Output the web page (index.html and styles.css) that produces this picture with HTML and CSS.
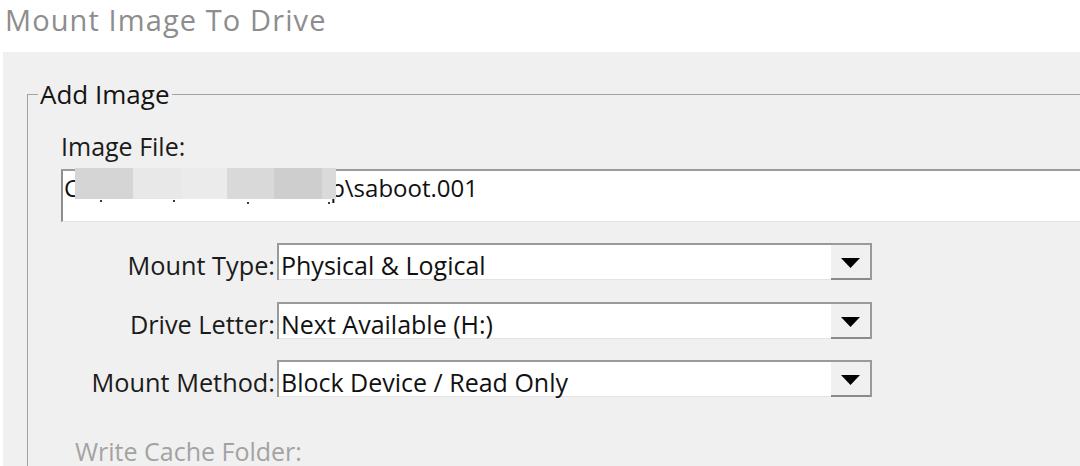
FILE: index.html
```html
<!DOCTYPE html>
<html lang="en">
<head>
<meta charset="utf-8">
<title>Mount Image To Drive</title>
<link rel="stylesheet" href="styles.css">
</head>
<body>
<div class="title">Mount Image To Drive</div>
<div class="panel">
  <fieldset class="group">
    <legend class="group-legend">Add Image</legend>
    <div class="content">
      <div class="field-label">Image File:</div>
      <div class="textbox">
        <span class="tb-text">C<span class="tb-gap"></span>p\saboot.001</span>
        <div class="redact">
          <span class="r1"></span><span class="r2"></span><span class="r3"></span><span class="r4"></span><span class="r5"></span><span class="r6"></span>
        </div>
        <span class="dot d1"></span><span class="dot d2"></span><span class="dot d3"></span><span class="dot d4"></span>
      </div>
      <div class="combos">
        <div class="row-label">Mount Type:</div>
        <div class="combo">
          <span class="value">Physical &amp; Logical</span>
          <span class="drop"><svg width="19" height="10" viewBox="0 0 19 10"><polygon points="0,0 19,0 9.5,10" fill="#000"/></svg></span>
        </div>
        <div class="row-label">Drive Letter:</div>
        <div class="combo">
          <span class="value">Next Available (H:)</span>
          <span class="drop"><svg width="19" height="10" viewBox="0 0 19 10"><polygon points="0,0 19,0 9.5,10" fill="#000"/></svg></span>
        </div>
        <div class="row-label">Mount Method:</div>
        <div class="combo">
          <span class="value">Block Device / Read Only</span>
          <span class="drop"><svg width="19" height="10" viewBox="0 0 19 10"><polygon points="0,0 19,0 9.5,10" fill="#000"/></svg></span>
        </div>
      </div>
      <div class="disabled-label">Write Cache Folder:</div>
    </div>
  </fieldset>
</div>
</body>
</html>
```

FILE: styles.css
```css
html, body {
  margin: 0;
  height: 100%;
  overflow: hidden;
  background: #ffffff;
  font-family: "Open Sans", "Noto Sans", "DejaVu Sans", sans-serif;
  color: #1b1b1b;
}

.title {
  height: 52px;
  padding-left: 5px;
  font-size: 29px;
  line-height: 40px;
  letter-spacing: 1.1px;
  color: #8d8d8d;
  white-space: nowrap;
}

.panel {
  height: calc(100% - 52px);
  margin-left: 3px;
  padding: 27px 0 0 24px;
  box-sizing: border-box;
  background: #f0f0f0;
  overflow: hidden;
}

.group {
  margin: 0 -40px 0 0;
  padding: 0;
  height: 500px;
  border: 1px solid #a3a3a3;
  min-width: 0;
}

.group-legend {
  margin-left: 10px;
  padding: 0 2px;
  font-size: 26px;
  line-height: 30px;
  color: #141414;
}

.content {
  padding-left: 33px;
}

.field-label {
  margin-top: 22px;
  font-size: 25px;
  line-height: 30px;
  height: 30px;
}

.textbox {
  position: relative;
  margin-top: 8px;
  height: 53px;
  box-sizing: border-box;
  padding: 2px 0 0 1px;
  background: #ffffff;
  border-top: 2px solid #9c9c9c;
  border-left: 2px solid #8e8e8e;
  border-bottom: 1px solid #e3e3e3;
  font-size: 24px;
  line-height: 30px;
  color: #111;
  white-space: nowrap;
}

.tb-gap {
  display: inline-block;
  width: 251px;
}

.redact {
  position: absolute;
  left: 12px;
  top: -3px;
  height: 31px;
  display: flex;
}

.redact span { display: block; height: 100%; }
.r1 { width: 58px; background: #d5d5d5; }
.r2 { width: 49px; background: #e8e8e8; }
.r3 { width: 45px; background: #ebebeb; }
.r4 { width: 47px; background: #d9d9d9; }
.r5 { width: 48px; background: #cecece; }
.r6 { width: 14px; background: #dadada; }

.dot {
  position: absolute;
  width: 2px;
  height: 2px;
  background: #3a3a3a;
}
.d1 { left: 37px; top: 29px; }
.d2 { left: 110px; top: 29px; }
.d3 { left: 184px; top: 31px; }
.d4 { left: 265px; top: 31px; }

.combos {
  margin-top: 21px;
  display: grid;
  grid-template-columns: 214px 595px;
  column-gap: 2px;
  row-gap: 21.5px;
}

.row-label {
  height: 37px;
  box-sizing: border-box;
  padding-top: 7px;
  text-align: right;
  font-size: 25.3px;
  line-height: 30px;
  white-space: nowrap;
}

.combo {
  display: flex;
  height: 37px;
  box-sizing: border-box;
  background: #ffffff;
  border-top: 2px solid #9a9a9a;
  border-left: 2px solid #9a9a9a;
  border-right: 2px solid #9a9a9a;
}

.value {
  flex: 1;
  padding: 5px 0 0 2px;
  font-size: 25px;
  line-height: 30px;
  color: #111;
  white-space: nowrap;
  border-bottom: 1px solid #e3e3e3;
}

.drop {
  width: 39px;
  display: flex;
  justify-content: center;
  align-items: center;
  padding-top: 3px;
  box-sizing: border-box;
  background: #f0f0f0;
  border-bottom: 2px solid #8a8a8a;
}

.drop svg { display: block; }

.disabled-label {
  margin-top: 39px;
  margin-left: 14px;
  font-size: 25px;
  line-height: 30px;
  color: #a3a3a3;
  white-space: nowrap;
}
```
